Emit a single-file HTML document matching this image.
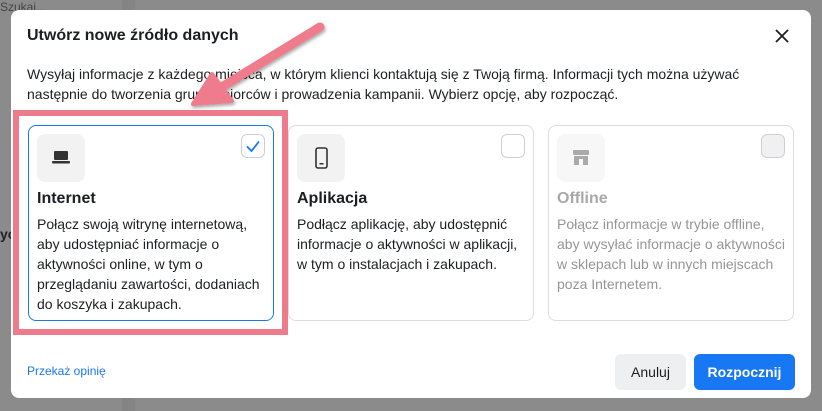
<!DOCTYPE html>
<html><head><meta charset="utf-8"><style>
*{box-sizing:border-box;margin:0;padding:0}
body{width:822px;height:411px;overflow:hidden;background:#8b8b8b;font-family:"Liberation Sans",Arial,sans-serif;position:relative;color:#1c1e21}
.abs{position:absolute}
.modal{left:11px;top:10px;width:800px;height:388px;background:#fff;border-radius:8px}
.card{position:absolute;top:125px;width:246px;height:196px;border:1px solid #dadde1;border-radius:8px;background:#fff}
.ib{position:absolute;left:8px;top:8px;width:48px;height:48px;border-radius:8px;background:#f2f2f2}
.ct{position:absolute;left:8px;top:64px;font-weight:bold;font-size:16px}
.cb{position:absolute;left:8px;top:88px;font-size:14px;line-height:20px;width:232px}
.chk{position:absolute;right:8px;top:8px;width:24px;height:24px;border:1px solid #ccd0d5;border-radius:6px;background:#fff}
</style></head><body>
<div class="abs" style="left:122px;top:0;width:13px;height:411px;background:#848484"></div>
<div class="abs" style="left:0;top:0;font-size:12px;color:#444">Szukaj...</div>
<div class="abs" style="left:0;top:226px;font-size:14px;font-weight:bold;color:#222">yc</div>
<div class="abs modal"></div>
<div class="abs" style="left:27px;top:27px;font-size:16px;font-weight:bold">Utwórz nowe źródło danych</div>
<svg class="abs" style="left:775px;top:29px" width="14" height="14"><path d="M1 1L13 13M13 1L1 13" stroke="#1c1e21" stroke-width="1.8"/></svg>
<div class="abs" style="left:27px;top:64px;font-size:14px;line-height:20px;white-space:nowrap">Wysyłaj informacje z każdego miejsca, w którym klienci kontaktują się z Twoją firmą. Informacji tych można używać<br>następnie do tworzenia grup odbiorców i prowadzenia kampanii. Wybierz opcję, aby rozpocząć.</div>
<div class="abs" style="left:13px;top:110px;width:275px;height:225px;border:6px solid #ee7b8c"></div>
<div class="card" style="left:28px;border:1.5px solid #1877f2">
 <div class="ib"><svg style="margin:16px 0 0 15px" width="18" height="15"><rect x="2" y="1" width="14" height="9" rx="1" fill="#333"/><rect x="0" y="11" width="18" height="2.5" rx="1" fill="#333"/></svg></div>
 <div class="chk" style="border-color:#ccd0d5"><svg width="22" height="22"><path d="M5 11.5L9.5 16L17 6.5" stroke="#1877f2" stroke-width="1.8" fill="none"/></svg></div>
 <div class="ct">Internet</div>
 <div class="cb">Połącz swoją witrynę internetową, aby udostępniać informacje o aktywności online, w tym o przeglądaniu zawartości, dodaniach do koszyka i zakupach.</div>
</div>
<div class="card" style="left:288px">
 <div class="ib"><svg style="margin:13px 0 0 18px" width="13" height="22"><rect x="1" y="1" width="11" height="20" rx="2" fill="none" stroke="#333" stroke-width="1.6"/><rect x="4.5" y="16" width="4" height="1.5" fill="#333"/></svg></div>
 <div class="chk"></div>
 <div class="ct">Aplikacja</div>
 <div class="cb">Podłącz aplikację, aby udostępnić informacje o aktywności w aplikacji, w tym o instalacjach i zakupach.</div>
</div>
<div class="card" style="left:548px">
 <div class="ib" style="background:#f7f7f7"><svg style="margin:16px 0 0 16px" width="16" height="16"><rect x="0" y="0" width="16" height="5" rx="1" fill="#aaa"/><rect x="1" y="6" width="14" height="9" fill="#aaa"/><rect x="6" y="9" width="4" height="6" fill="#f7f7f7"/></svg></div>
 <div class="chk" style="background:#f0f0f0"></div>
 <div class="ct" style="color:#a8a8a8">Offline</div>
 <div class="cb" style="color:#959595">Połącz informacje w trybie offline, aby wysyłać informacje o aktywności w sklepach lub w innych miejscach poza Internetem.</div>
</div>
<div class="abs" style="left:27px;top:364px;font-size:12px;color:#1877f2">Przekaż opinię</div>
<div class="abs" style="left:615px;top:354px;width:71px;height:36px;border-radius:6px;background:#eeeff1;font-size:14px;text-align:center;line-height:36px">Anuluj</div>
<div class="abs" style="left:694px;top:354px;width:101px;height:36px;border-radius:6px;background:#1877f2;color:#fff;font-weight:bold;font-size:14px;text-align:center;line-height:36px">Rozpocznij</div>
<svg class="abs" style="left:0;top:0" width="822" height="411">
<defs><filter id="s"><feDropShadow dx="1" dy="2" stdDeviation="1.5" flood-opacity="0.35"/></filter></defs>
<g filter="url(#s)">
<path d="M320 27L220 88" stroke="#ee7b8c" stroke-width="9" stroke-linecap="round"/>
<path d="M193 104L212 74L232 101Z" fill="#ee7b8c" stroke="#ee7b8c" stroke-width="4" stroke-linejoin="round"/>
</g></svg>
</body></html>
